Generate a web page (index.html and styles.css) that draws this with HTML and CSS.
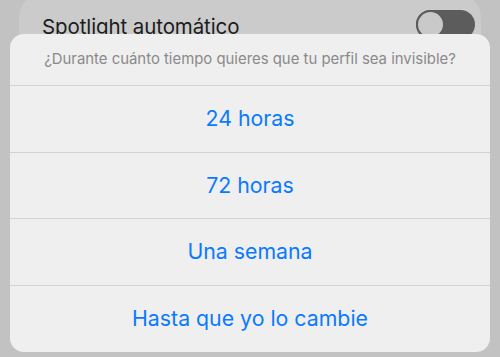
FILE: index.html
```html
<!DOCTYPE html>
<html lang="es">
  <head>
    <meta charset="UTF-8" />
    <meta name="viewport" content="width=device-width, initial-scale=1.0" />
    <title>Modo invisible</title>
    <link rel="stylesheet" href="styles.css">
  </head>
  <body>
    <div class="settings">
      <div class="settings-card">
        <div class="settings-row">
          <span class="settings-label">Spotlight automático</span>
          <span class="toggle"><span class="toggle-knob"></span></span>
        </div>
      </div>
    </div>

    <div class="action-sheet">
      <div class="action-sheet-title">¿Durante cuánto tiempo quieres que tu perfil sea invisible?</div>
      <button class="action-item">24 horas</button>
      <button class="action-item">72 horas</button>
      <button class="action-item">Una semana</button>
      <button class="action-item">Hasta que yo lo cambie</button>
    </div>
  </body>
</html>
```

FILE: styles.css
```css
html, body {
  margin: 0;
  height: 100%;
}

body {
  background: #c2c2c2;
  font-family: Inter, "Noto Sans", sans-serif;
  overflow: hidden;
  position: relative;
}

.settings {
  padding: 0 19px;
  margin-top: -8px;
}

.settings-card {
  background: #cbcbcb;
  border-radius: 26px;
  height: 200px;
}

.settings-row {
  display: flex;
  align-items: flex-start;
  justify-content: space-between;
  padding: 18px 6px 0 23px;
}

.settings-label {
  font-size: 20.5px;
  line-height: 24px;
  margin-top: 5px;
  color: #1c1c1c;
  letter-spacing: -0.1px;
}

.toggle {
  width: 59px;
  height: 29px;
  border-radius: 15px;
  background: #5c5c5c;
  display: flex;
  align-items: center;
  box-sizing: border-box;
}

.toggle-knob {
  width: 29px;
  height: 29px;
  border-radius: 50%;
  box-sizing: border-box;
  background: #c9c9c9;
  border: 2px solid #5c5c5c;
}

.action-sheet {
  position: absolute;
  top: 34px;
  left: 10px;
  right: 10px;
  background: #efefef;
  border-radius: 14px;
  display: flex;
  flex-direction: column;
  overflow: hidden;
}

.action-sheet-title {
  height: 51px;
  display: flex;
  align-items: center;
  justify-content: center;
  font-size: 14.9px;
  color: #8a8a8a;
  padding-bottom: 2px;
  box-sizing: border-box;
}

.action-item {
  height: 66.7px;
  box-sizing: border-box;
  border: none;
  border-top: 1px solid #d3d3d3;
  background: transparent;
  font-family: inherit;
  font-size: 21.3px;
  color: #0a7aff;
  padding: 0 0 2px;
  cursor: pointer;
}
```
